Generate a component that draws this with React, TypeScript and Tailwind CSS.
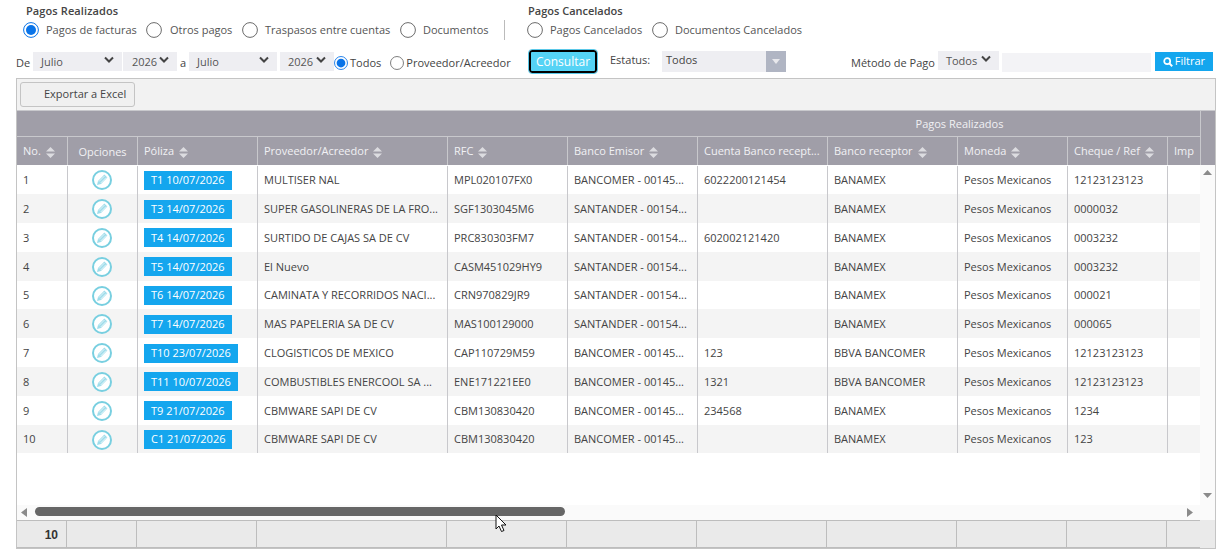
import React from "react";

const gridCols = "grid-cols-[51px_70px_120px_190px_120px_130px_130px_130px_110px_100px_33px]";
const footCols = ["w-[50px]", "w-[70px]", "w-[120px]", "w-[190px]", "w-[120px]", "w-[130px]", "w-[130px]", "w-[130px]", "w-[110px]", "w-[100px]", "flex-1"];

const rows = [
  ["1", "T1 10/07/2026", "MULTISER NAL", "MPL020107FX0", "BANCOMER - 00145...", "6022200121454", "BANAMEX", "12123123123"],
  ["2", "T3 14/07/2026", "SUPER GASOLINERAS DE LA FRO...", "SGF1303045M6", "SANTANDER - 00154...", "", "BANAMEX", "0000032"],
  ["3", "T4 14/07/2026", "SURTIDO DE CAJAS SA DE CV", "PRC830303FM7", "SANTANDER - 00154...", "602002121420", "BANAMEX", "0003232"],
  ["4", "T5 14/07/2026", "El Nuevo", "CASM451029HY9", "SANTANDER - 00154...", "", "BANAMEX", "0003232"],
  ["5", "T6 14/07/2026", "CAMINATA Y RECORRIDOS NACI...", "CRN970829JR9", "SANTANDER - 00154...", "", "BANAMEX", "000021"],
  ["6", "T7 14/07/2026", "MAS PAPELERIA SA DE CV", "MAS100129000", "SANTANDER - 00154...", "", "BANAMEX", "000065"],
  ["7", "T10 23/07/2026", "CLOGISTICOS DE MEXICO", "CAP110729M59", "BANCOMER - 00145...", "123", "BBVA BANCOMER", "12123123123"],
  ["8", "T11 10/07/2026", "COMBUSTIBLES ENERCOOL SA ...", "ENE171221EE0", "BANCOMER - 00145...", "1321", "BBVA BANCOMER", "12123123123"],
  ["9", "T9 21/07/2026", "CBMWARE SAPI DE CV", "CBM130830420", "BANCOMER - 00145...", "234568", "BANAMEX", "1234"],
  ["10", "C1 21/07/2026", "CBMWARE SAPI DE CV", "CBM130830420", "BANCOMER - 00145...", "", "BANAMEX", "123"],
];

function Radio({ on, size = 16 }: { on?: boolean; size?: number }) {
  return (
    <svg width={size} height={size} viewBox="0 0 16 16" className="shrink-0">
      <circle cx="8" cy="8" r="7.4" fill="white" stroke={on ? "#0a74e8" : "#6b6b6b"} strokeWidth="1" />
      {on && <circle cx="8" cy="8" r="5" fill="#0a74e8" />}
    </svg>
  );
}

function Chevron() {
  return (
    <svg width="10" height="8" viewBox="0 0 10 8" className="shrink-0">
      <path d="M1 1.5 L5 5.5 L9 1.5" fill="none" stroke="#444" strokeWidth="2" />
    </svg>
  );
}

function Select({ label, w, pl = "pl-2" }: { label: string; w: string; pl?: string }) {
  return (
    <div className={`${w} ${pl} h-[19px] bg-[#eeeef2] flex items-center justify-between pr-2 text-[11px] text-[#555] shrink-0`}>
      <span className="mt-[2px]">{label}</span>
      <span className="-mt-[3px]"><Chevron /></span>
    </div>
  );
}

function Sort() {
  return (
    <svg width="9" height="11" viewBox="0 0 9 11" className="shrink-0 ml-[5px] mt-[3px]">
      <path d="M4.5 0 L9 4.5 H0 Z M4.5 11 L9 6.5 H0 Z" fill="#dcdce0" />
    </svg>
  );
}

function Pencil() {
  return (
    <svg width="20" height="20" viewBox="0 0 20 20">
      <circle cx="10" cy="10" r="9" fill="white" stroke="#78cfe0" strokeWidth="2" />
      <path d="M5 15 L6 11 L12.4 4.6 L15.4 7.6 L9 14 Z" fill="#9edcea" />
      <path d="M7 11.5 L12.6 5.9 M8.6 13.1 L14.2 7.5" stroke="white" strokeWidth="0.7" />
    </svg>
  );
}

function HeadCell({ children, sort = true, border = true, center }: { children: React.ReactNode; sort?: boolean; border?: boolean; center?: boolean }) {
  return (
    <div className={`h-[28px] flex items-center overflow-hidden whitespace-nowrap text-[11px] text-[#f1f1f4] ${center ? "justify-center" : "pl-[6px]"} ${border ? "border-r border-[#c8c8cc]" : ""}`}>
      <span className={center ? "mt-[3px]" : "mt-[1px]"}>{children}</span>
      {sort && <Sort />}
    </div>
  );
}

function Cell({ children, cls = "" }: { children?: React.ReactNode; cls?: string }) {
  return (
    <div className={`h-[28.8px] flex items-center pl-[6px] pt-px whitespace-nowrap overflow-hidden border-r border-[#c8c8cc] ${cls}`}>
      {children}
    </div>
  );
}

export default function App() {
  return (
    <div className="relative w-[1229px] h-[556px] bg-white overflow-hidden text-[11px] text-[#444] font-['Open_Sans',sans-serif]">
      <div className="flex h-[49px]">
        <div className="pl-[23px] w-[504px] shrink-0">
          <div className="pt-[3px] pl-[3px] h-[20px] text-[11px] font-semibold text-[#444] tracking-[0.1px]">Pagos Realizados</div>
          <div className="flex items-center h-[20px] text-[11px] text-[#555] whitespace-nowrap">
            <Radio on />
            <span className="ml-[7px] mr-[10px] w-[90px]">Pagos de facturas</span>
            <Radio />
            <span className="ml-[8px] mr-[11px] w-[61px]">Otros pagos</span>
            <Radio />
            <span className="ml-[7px] mr-[11px] w-[124px]">Traspasos entre cuentas</span>
            <Radio />
            <span className="ml-[7px] mr-[15px] w-[66px]">Documentos</span>
            <span className="w-[1px] h-[20px] bg-[#bbb]" />
          </div>
        </div>
        <div className="pl-[23px]">
          <div className="pt-[3px] pl-[1px] h-[20px] text-[11px] font-semibold text-[#444]">Pagos Cancelados</div>
          <div className="flex items-center h-[20px] text-[11px] text-[#555] whitespace-nowrap">
            <Radio />
            <span className="ml-[7px] mr-[9px] w-[93px]">Pagos Cancelados</span>
            <Radio />
            <span className="ml-[7px]">Documentos Cancelados</span>
          </div>
        </div>
      </div>

      <div className="flex h-[29px] items-start whitespace-nowrap">
        <div className="flex items-center pl-[16px] pt-[2px] w-[528px] shrink-0">
          <span className="w-[17px] text-[11px] mt-[3px]">De</span>
          <Select label="Julio" w="w-[89px]" />
          <span className="w-[1px]" />
          <Select label="2026" w="w-[54px]" pl="pl-[9px]" />
          <span className="w-[12px] text-center mt-[3px]">a</span>
          <Select label="Julio" w="w-[88px]" />
          <span className="w-[3px]" />
          <Select label="2026" w="w-[54px]" />
          <span className="mt-[4px]"><Radio on size={14} /></span>
          <span className="ml-[2px] mr-[9px] mt-[4px]">Todos</span>
          <span className="mt-[4px]"><Radio size={14} /></span>
          <span className="ml-[2px] mt-[4px]">Proveedor/Acreedor</span>
        </div>
        <div className="w-[82px] pt-[1px] pl-[1px] shrink-0">
          <div className="w-[68px] h-[23px] flex items-center justify-center bg-[#55d3f5] border-2 border-black rounded-[3px] text-[12px] text-white outline outline-1 outline-[#5bc8e8]">Consultar</div>
        </div>
        <div className="flex items-center pt-[2px] shrink-0">
          <span className="w-[52px] -mt-[2px]">Estatus:</span>
          <div className="w-[124px] h-[21px] bg-[#eeeef2] flex items-center justify-between pl-[4px]">
            <span className="-mt-[2px]">Todos</span>
            <span className="w-[20px] h-[21px] bg-[#b0b5c3] flex items-center justify-center">
              <svg width="8" height="5" viewBox="0 0 8 5"><path d="M0 0 H8 L4 5 Z" fill="#e8e8ec" /></svg>
            </span>
          </div>
        </div>
        <div className="flex items-start pt-[2px] ml-[65px] shrink-0">
          <span className="mr-[3px] mt-[4px]">Método de Pago</span>
          <Select label="Todos" w="w-[61px]" pl="pl-[8px]" />
          <div className="w-[3px]" />
          <div className="w-[149px] h-[19px] mt-[2px] bg-[#f3f3f6]" />
          <div className="w-[4px]" />
          <div className="w-[58px] h-[19px] mt-[1px] bg-[#14a6ee] text-white text-[11px] font-medium flex items-center justify-center gap-[2px]">
            <svg width="10" height="10" viewBox="0 0 10 10"><circle cx="4.2" cy="4.2" r="3" fill="none" stroke="white" strokeWidth="1.7" /><path d="M6.4 6.4 L9.2 9.2" stroke="white" strokeWidth="2" /></svg>
            <span>Filtrar</span>
          </div>
        </div>
      </div>

      <div className="ml-[16px] w-[1200px] border-x border-[#c4c4c4]">
        <div className="h-[32px] bg-[#f2f2f2] border-t border-[#c4c4c4] flex items-start pl-[3px] pt-[3px]">
          <button className="w-[115px] h-[25px] pl-[23px] text-left text-[11px] text-[#444] bg-[#f0f0f0] border border-[#c4c4c4] rounded-[3px]">Exportar a Excel</button>
        </div>
        <div className="flex bg-[#a09ea8]">
          <div className="w-[1183px]">
            <div className="h-[27px] flex items-center justify-center pl-[702px] text-[11px] text-[#f1f1f4] border-y border-[#c8c8cc]">
              <span className="w-[0px] whitespace-nowrap flex justify-center mt-[1px]">Pagos Realizados</span>
            </div>
            <div className={`grid ${gridCols}`}>
              <HeadCell>No.</HeadCell>
              <HeadCell sort={false} center>Opciones</HeadCell>
              <HeadCell>Póliza</HeadCell>
              <HeadCell>Proveedor/Acreedor</HeadCell>
              <HeadCell>RFC</HeadCell>
              <HeadCell>Banco Emisor</HeadCell>
              <HeadCell sort={false}>Cuenta Banco recept...</HeadCell>
              <HeadCell>Banco receptor</HeadCell>
              <HeadCell>Moneda</HeadCell>
              <HeadCell>Cheque / Ref</HeadCell>
              <HeadCell sort={false} border={false}>Imp</HeadCell>
            </div>
          </div>
          <div className="w-[15px] border-l border-t border-[#c8c8cc]" />
        </div>
        <div className="flex h-[355px]">
          <div className="w-[1183px] flex flex-col">
            <div className="flex-1 overflow-hidden pt-[0.5px]">
              {rows.map((r, i) => (
                <div key={r[0]} className={`grid ${gridCols} text-[11px] text-[#444] ${i % 2 ? "bg-[#f4f4f4]" : "bg-white"}`}>
                  <Cell>{r[0]}</Cell>
                  <Cell cls="justify-center !pl-0 pr-[1px]"><Pencil /></Cell>
                  <Cell>
                    <span className="h-[19px] px-[7px] bg-[#14a6ee] text-white text-[11px] font-medium flex items-center">{r[1]}</span>
                  </Cell>
                  <Cell>{r[2]}</Cell>
                  <Cell>{r[3]}</Cell>
                  <Cell>{r[4]}</Cell>
                  <Cell>{r[5]}</Cell>
                  <Cell>{r[6]}</Cell>
                  <Cell>Pesos Mexicanos</Cell>
                  <Cell>{r[7]}</Cell>
                  <div className="h-[28.8px]" />
                </div>
              ))}
            </div>
            <div className="relative h-[15px] bg-[#fafafa] flex items-center justify-between pl-[4px] pr-[7px]">
              <svg width="6" height="9" viewBox="0 0 6 9"><path d="M6 0 V9 L0 4.5 Z" fill="#8a8a8a" /></svg>
              <div className="absolute left-[18px] top-[2px] w-[530px] h-[9px] rounded-full bg-[#666]" />
              <svg width="6" height="9" viewBox="0 0 6 9"><path d="M0 0 V9 L6 4.5 Z" fill="#8a8a8a" /></svg>
            </div>
          </div>
          <div className="w-[15px] bg-[#fafafa] flex flex-col items-center justify-between pt-[5px] relative">
            <svg width="9" height="5" viewBox="0 0 9 5"><path d="M4.5 0 L9 5 H0 Z" fill="#8a8a8a" /></svg>
            <svg width="9" height="5" viewBox="0 0 9 5" className="mb-[22px]"><path d="M0 0 H9 L4.5 5 Z" fill="#8a8a8a" /></svg>
          </div>
        </div>
        <div className="flex h-[29px] bg-[#eaeaea] border-b border-[#c4c4c4]">
          <div className="w-[1183px] flex border-t border-b border-[#bdbdbd]">
            {footCols.map((w, i) => (
              <div key={i} className={`${w} ${i < 10 ? "border-r border-[#bdbdbd]" : ""} ${i === 0 ? "text-right pr-[8px] font-['Liberation_Sans',sans-serif] font-bold text-[12px] text-[#333] leading-[28px]" : ""}`}>
                {i === 0 ? "10" : ""}
              </div>
            ))}
          </div>
        </div>
      </div>

      <svg width="13" height="19" viewBox="0 0 13 19" className="absolute left-[495px] top-[514px]">
        <path d="M1 1 V15 L4 12 L6.5 17.5 L9 16.5 L6.5 11 H11 Z" fill="white" stroke="#111" strokeWidth="1" />
      </svg>
    </div>
  );
}
